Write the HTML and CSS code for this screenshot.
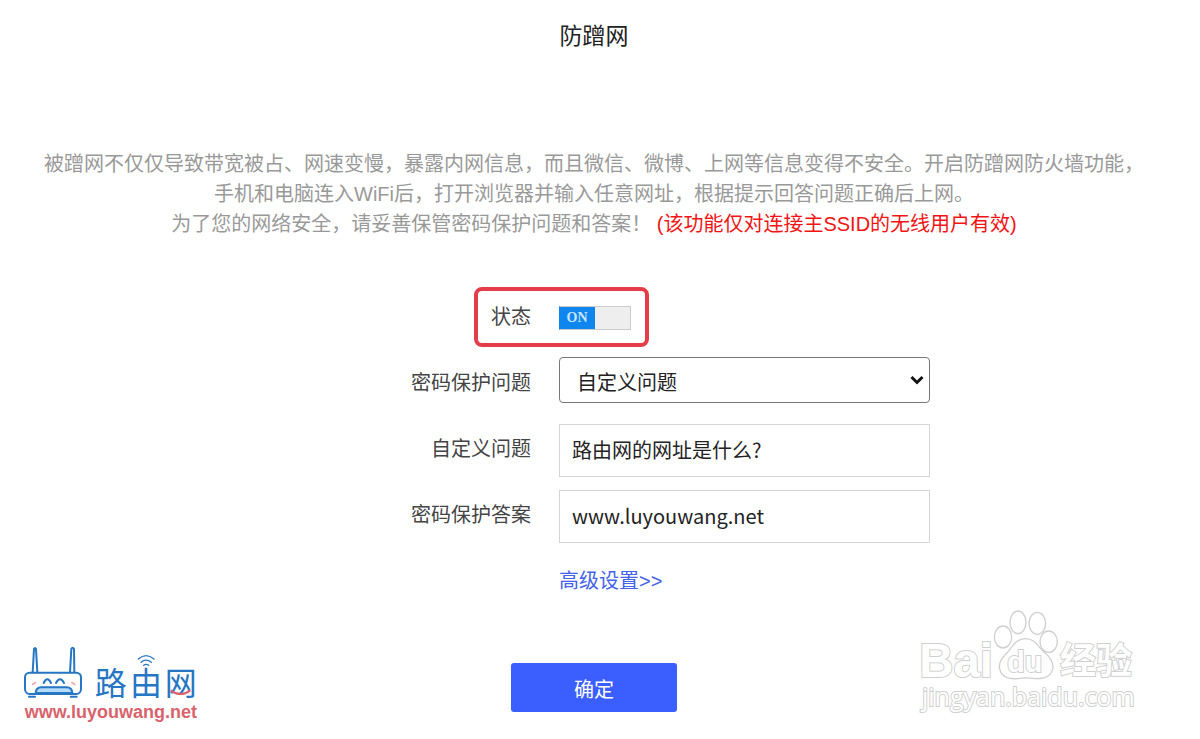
FILE: index.html
```html
<!DOCTYPE html>
<html lang="zh-CN">
<head>
    <meta charset="UTF-8">
    <meta name="viewport" content="width=device-width, initial-scale=1">
    <title>防蹭网</title>
    <link rel="stylesheet" href="styles.css">
</head>
<body>
    <main class="page">
        <h1>防蹭网</h1>

        <p class="intro">
            被蹭网不仅仅导致带宽被占、网速变慢，暴露内网信息，而且微信、微博、上网等信息变得不安全。开启防蹭网防火墙功能，<br>
            手机和电脑连入WiFi后，打开浏览器并输入任意网址，根据提示回答问题正确后上网。<br>
            为了您的网络安全，请妥善保管密码保护问题和答案！ <span class="warning">(该功能仅对连接主SSID的无线用户有效)</span>
        </p>

        <form>
            <div class="row highlight">
                <label for="status">状态</label>
                <div class="switch">
                    <input type="checkbox" id="status" checked>
                    <span class="switch-text">ON</span>
                </div>
            </div>
            <div class="row">
                <label for="question">密码保护问题</label>
                <div class="select-box">
                    <select id="question">
                        <option>自定义问题</option>
                    </select>
                    <svg class="arrow" viewBox="0 0 14 10"><path d="M1.5 2 L7 7.5 L12.5 2"/></svg>
                </div>
            </div>
            <div class="row">
                <label for="custom">自定义问题</label>
                <input class="text" type="text" id="custom" value="路由网的网址是什么?">
            </div>
            <div class="row">
                <label for="answer">密码保护答案</label>
                <input class="text" type="text" id="answer" value="www.luyouwang.net">
            </div>
            <div class="row">
                <a href="#">高级设置&gt;&gt;</a>
            </div>
            <button type="button">确定</button>
        </form>

        <!-- router logo -->
        <svg class="logo" viewBox="60 40 600 240">
            <g class="blue">
                <path d="M98 128 L102 58 Q105 52 108 58 L112 128 M210 128 L214 58 Q218 50 222 58 L223 128"/>
                <rect x="75" y="129" width="168" height="64" rx="14"/>
                <path class="mouth" d="M107 190 Q108 173 124 173 L200 173 Q216 173 217 190 Z"/>
                <path d="M131 160 Q142 138 153 160 M168 160 Q180 138 192 160 M87 201 H105 M212 201 H230"/>
                <path class="wifi" d="M415 88 Q438 68 462 88 M423 98 Q438 85 454 98 M431 107 Q438 101 446 107"/>
            </g>
            <path class="cheek" d="M96 165 L108 158 M214 158 L226 165"/>
            <text class="name" x="284 390 494" y="195">路由网</text>
            <path class="smile" d="M512 182 Q542 204 571 182"/>
            <text class="site" x="74" y="264">www.luyouwang.net</text>
        </svg>

        <!-- watermark -->
        <svg class="watermark" viewBox="0 0 780 375">
            <text class="bai" x="58" y="232">Bai</text>
            <ellipse cx="309" cy="111" rx="26" ry="33"/>
            <ellipse cx="354" cy="67" rx="24" ry="34"/>
            <ellipse cx="412" cy="70" rx="25" ry="33"/>
            <ellipse cx="446" cy="125" rx="26" ry="32"/>
            <path d="M376 116 C405 116 412 138 431 155 C451 171 462 186 458 207 C452 236 422 240 377 233 C331 241 306 235 299 207 C294 184 311 169 325 154 C340 136 350 116 376 116 Z"/>
            <text class="du" x="322" y="215">du</text>
            <text class="jingyan" x="480" y="222">经验</text>
            <text class="domain" x="66" y="319">jingyan.baidu.com</text>
        </svg>
    </main>
</body>
</html>
```
FILE: styles.css
```css
*, *::after {
    box-sizing: border-box;
}
body {
    margin: 0;
    background-color: white;
    font-family: "Liberation Sans", "Noto Sans CJK SC", sans-serif;
    font-size: 20px;
    color: #444;
}
.page {
    position: relative;
    padding: 20px 12px 27px 0;
}
h1 {
    margin: 0 0 97px;
    font-size: 23px;
    font-weight: 400;
    line-height: 32px;
    text-align: center;
    color: #222;
}
.intro {
    margin: 0 0 46px;
    line-height: 30px;
    text-align: center;
    white-space: nowrap;
    color: #999;
}
.warning {
    color: #f01414;
}

/* form rows */
.row {
    position: relative;
    display: grid;
    grid-template-columns: calc(50% - 63px) 371px;
    column-gap: 28px;
    align-items: center;
    height: 66px;
}
.row label, .row a {
    padding-bottom: 5px;
}
.row label {
    text-align: right;
}
.row a {
    grid-column: 2;
    color: #4463e8;
    text-decoration: none;
}
.highlight::after {
    content: "";
    position: absolute;
    top: 2px;
    left: calc(50% - 120px);
    width: 175px;
    height: 60px;
    border: 4px solid #e43d4a;
    border-radius: 8px;
    pointer-events: none;
}
.text, select {
    width: 100%;
    font-family: "Noto Sans CJK SC", sans-serif;
    font-size: 20px;
    color: #222;
    background-color: white;
}
.text {
    height: 53px;
    padding: 0 12px 2px;
    border: 1px solid #d5d5d5;
}
.select-box {
    position: relative;
    height: 54px;
}
select {
    appearance: none;
    display: block;
    height: 46px;
    padding: 2px 17px 0;
    border: 1px solid #777;
    border-radius: 4px;
}
.arrow {
    position: absolute;
    top: 18px;
    right: 6px;
    width: 14px;
    height: 10px;
    fill: none;
    stroke: #111;
    stroke-width: 3;
    pointer-events: none;
}

/* on/off switch */
.switch {
    position: relative;
    width: 72px;
    height: 24px;
}
.switch input {
    appearance: none;
    display: block;
    width: 100%;
    height: 100%;
    margin: 0;
    border: 1px solid #ccc;
    background-color: #eee;
}
.switch input:checked {
    background-image: linear-gradient(to right, #0f85ee 36px, #eee 36px);
    background-origin: border-box;
    border-left-color: #0f85ee;
}
.switch-text {
    position: absolute;
    top: 0;
    left: 0;
    width: 36px;
    font-family: "Liberation Serif", serif;
    font-size: 14px;
    font-weight: 700;
    line-height: 24px;
    text-align: center;
    color: #c9e6ff;
    pointer-events: none;
}

button {
    display: block;
    width: 166px;
    height: 49px;
    margin: 48px auto 0;
    padding: 2px 0 0;
    border: 0;
    border-radius: 3px;
    background-color: #3a5eff;
    font-family: inherit;
    font-size: 20px;
    color: white;
}

/* logo and watermark lie over the page corners */
.logo {
    position: absolute;
    left: 20px;
    bottom: 16px;
    width: 200px;
    height: 80px;
}
.blue {
    fill: none;
    stroke: #2676c4;
    stroke-width: 6;
    stroke-linecap: round;
}
.blue .mouth {
    fill: #b5dcfa;
}
.blue .wifi {
    stroke-width: 4;
}
.cheek {
    stroke: #f3a9ae;
    stroke-width: 5;
}
.smile {
    fill: none;
    stroke: #d9626c;
    stroke-width: 6;
}
.name {
    font-family: "Noto Sans CJK SC", sans-serif;
    font-size: 96px;
    fill: #2676c4;
}
.site {
    font-size: 54px;
    font-weight: 700;
    fill: #d9626c;
}
.watermark {
    position: absolute;
    right: 40px;
    bottom: 14px;
    width: 260px;
    height: 125px;
    fill: white;
    stroke: #d0d0d0;
    stroke-width: 4;
}
.watermark text {
    stroke-width: 6;
    paint-order: stroke;
}
.bai {
    font-size: 142px;
    font-weight: 700;
}
.du {
    font-size: 86px;
    font-weight: 700;
}
.jingyan {
    font-family: "Noto Sans CJK SC", sans-serif;
    font-size: 108px;
    font-weight: 700;
}
.domain {
    font-family: "Open Sans", sans-serif;
    font-size: 75px;
}
```
